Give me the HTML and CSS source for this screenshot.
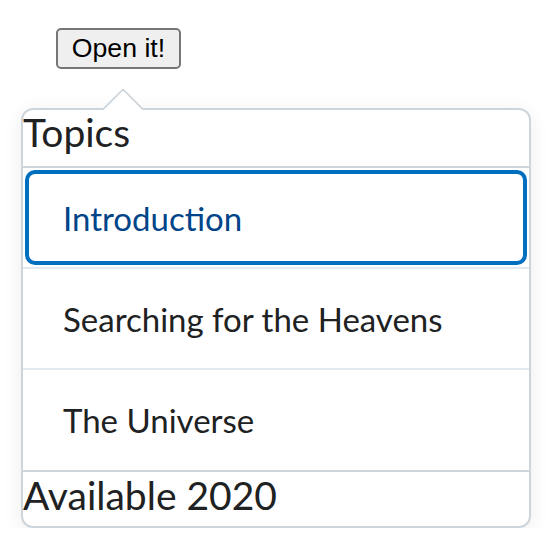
FILE: index.html
```html
<!DOCTYPE html>
<html>
<head>
<meta charset="utf-8">
<link rel="stylesheet" href="styles.css">
</head>
<body>
<div class="page">
  <button class="opener">Open it!</button>
  <div class="dropdown">
    <div class="pointer"></div>
    <div class="header">Topics</div>
    <ul class="menu">
      <li class="item focused"><span>Introduction</span></li>
      <li class="item"><span>Searching for the Heavens</span></li>
      <li class="item"><span>The Universe</span></li>
    </ul>
    <div class="footer">Available 2020</div>
  </div>
</div>
</body>
</html>
```
FILE: styles.css
```css
html, body {
  margin: 0;
  padding: 0;
  background: #fff;
}
.page {
  padding: 28px 0 0 21px;
  display: flex;
  flex-direction: column;
  align-items: flex-start;
}
.opener {
  margin-left: 35px;
  font-family: "Liberation Sans", Arial, sans-serif;
  font-size: 26.67px;
  height: 41px;
  width: 125px;
  padding: 0;
  border: 2px solid #767676;
  border-radius: 5px;
  background: #efefef;
  color: #000;
}
.dropdown {
  position: relative;
  margin-top: 39px;
  width: 510px;
  box-sizing: border-box;
  border: 2px solid #cdd5dc;
  border-radius: 12px;
  background: #fff;
  box-shadow: 0 4px 20px rgba(0,0,0,0.08);
  font-family: Lato, "Noto Sans", sans-serif;
  color: #202122;
}
.pointer {
  position: absolute;
  top: -16px;
  left: 85px;
  width: 30px;
  height: 30px;
  box-sizing: border-box;
  background: #fff;
  border-top: 2px solid #cdd5dc;
  border-left: 2px solid #cdd5dc;
  transform: rotate(45deg);
  border-top-left-radius: 3px;
}
.header {
  position: relative;
  font-size: 39px;
  line-height: 44px;
  padding-bottom: 12px;
  border-bottom: 2px solid #cdd5dc;
}
.menu {
  list-style: none;
  margin: 0;
  padding: 0;
}
.item {
  height: 101px;
  box-sizing: border-box;
  border-bottom: 2px solid #e3e9f1;
  display: flex;
  align-items: center;
  padding: 0 40px;
  font-size: 33px;
  position: relative;
}
.item:last-child {
  border-bottom: 0;
  height: 100px;
}
.item.focused {
  color: #004489;
}
.item.focused::after {
  content: "";
  position: absolute;
  left: 2px;
  right: 2px;
  top: 2px;
  bottom: 2px;
  border: 4px solid #006fbf;
  border-radius: 10px;
}
.footer {
  font-size: 39px;
  line-height: 46px;
  padding-bottom: 8px;
  border-top: 2px solid #cdd5dc;
}
```
